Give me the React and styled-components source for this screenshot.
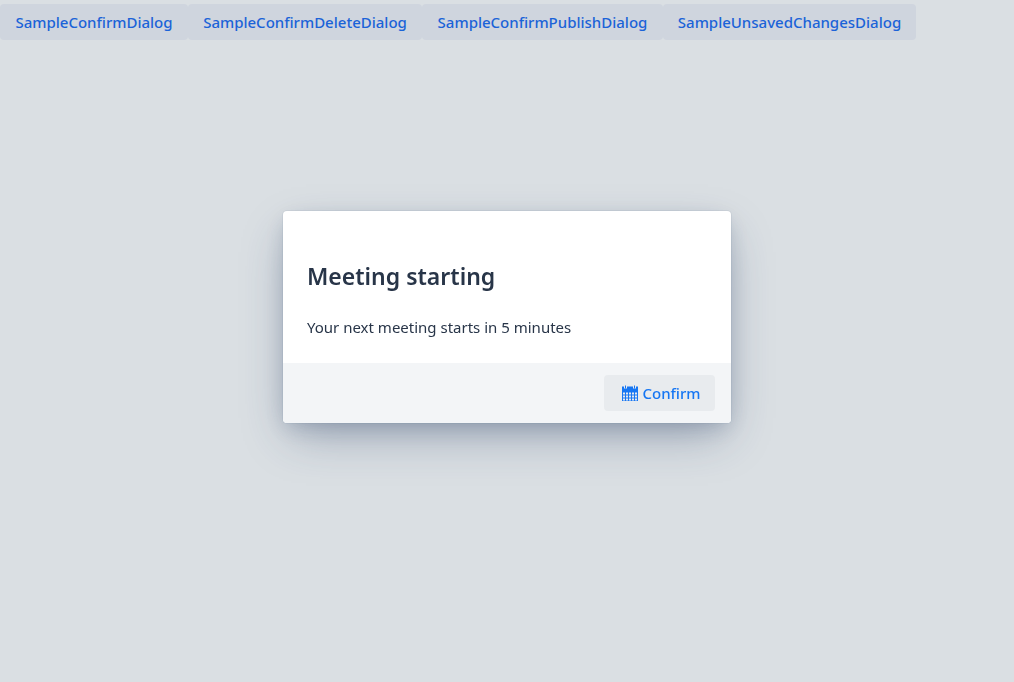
import React from "react";
import styled, { createGlobalStyle } from "styled-components";

const GlobalStyle = createGlobalStyle`
  *, *::before, *::after { box-sizing: border-box; }
  body {
    margin: 0;
    min-height: 100vh;
    background: #dadfe3;
    color: #283548;
    font-family: "Noto Sans", "Open Sans", sans-serif;
    font-size: 15px;
    line-height: 26px;
  }
`;

const Toolbar = styled.div`
  display: flex;
  flex-wrap: wrap;
  padding: 4px 0;
`;

const Button = styled.button`
  height: 36px;
  min-width: ${(p) => p.$width || "0"};
  padding: 0 12px;
  border: 0;
  border-radius: 4px;
  background: ${(p) => (p.$dimmed ? "#cfd5de" : "#e8ebee")};
  color: ${(p) => (p.$dimmed ? "#1b63d8" : "#1676f3")};
  display: inline-flex;
  align-items: center;
  justify-content: center;
  gap: 4px;
  font: inherit;
  font-weight: 500;
  white-space: nowrap;
  cursor: pointer;
`;

const Overlay = styled.div`
  position: fixed;
  inset: 0;
  padding: 16px 16px 64px;
  display: flex;
  align-items: center;
  justify-content: center;
  pointer-events: none;
`;

const Dialog = styled.section`
  width: 448px;
  max-width: 100%;
  border-radius: 4px;
  overflow: hidden;
  background: #fff;
  pointer-events: auto;
  box-shadow:
    0 0 0 1px rgba(26, 57, 96, 0.05),
    0 6px 20px -3px rgba(36, 58, 96, 0.2),
    0 18px 44px -8px rgba(36, 58, 96, 0.38);
`;

const Content = styled.div`
  padding: 48px 24px 23px;
`;

const Title = styled.h2`
  margin: 0 0 21px;
  font-size: 23px;
  line-height: 34px;
  font-weight: 600;
`;

const Message = styled.p`
  margin: 0;
  font-weight: 400;
`;

const Footer = styled.footer`
  display: flex;
  justify-content: flex-end;
  padding: 12px 16px;
  background: #f3f5f7;
`;

const Icon = styled.svg`
  width: 16px;
  height: 16px;
  margin-left: 4px;
  flex: none;
`;

const CalendarIcon = () => (
  <Icon viewBox="0 0 16 16" fill="currentColor" aria-hidden="true">
    <path d="M3 .5h1v3H3zM12 .5h1v3h-1z" />
    <path d="M14 1.5v2h-3v-2H5v2H2v-2H0V16h16V1.5h-2zM3 15.5H1v-2h2v2zm0-3H1v-2h2v2zm0-3H1v-2h2v2zM6 15.5H4v-2h2v2zm0-3H4v-2h2v2zm0-3H4v-2h2v2zM9 15.5H7v-2h2v2zm0-3H7v-2h2v2zm0-3H7v-2h2v2zM12 15.5h-2v-2h2v2zm0-3h-2v-2h2v2zm0-3h-2v-2h2v2zM15 15.5h-2v-2h2v2zm0-3h-2v-2h2v2zm0-3h-2v-2h2v2z" />
  </Icon>
);

const samples = [
  { label: "SampleConfirmDialog", width: "188px" },
  { label: "SampleConfirmDeleteDialog", width: "234px" },
  { label: "SampleConfirmPublishDialog", width: "241px" },
  { label: "SampleUnsavedChangesDialog", width: "253px" },
];

export default function App() {
  return (
    <>
      <GlobalStyle />
      <Toolbar>
        {samples.map((s) => (
          <Button key={s.label} type="button" $dimmed $width={s.width}>
            {s.label}
          </Button>
        ))}
      </Toolbar>
      <Overlay>
        <Dialog role="dialog" aria-labelledby="dialog-title" aria-describedby="dialog-message">
          <Content>
            <Title id="dialog-title">Meeting starting</Title>
            <Message id="dialog-message">Your next meeting starts in 5 minutes</Message>
          </Content>
          <Footer>
            <Button type="button" $width="111px">
              <CalendarIcon />
              Confirm
            </Button>
          </Footer>
        </Dialog>
      </Overlay>
    </>
  );
}
